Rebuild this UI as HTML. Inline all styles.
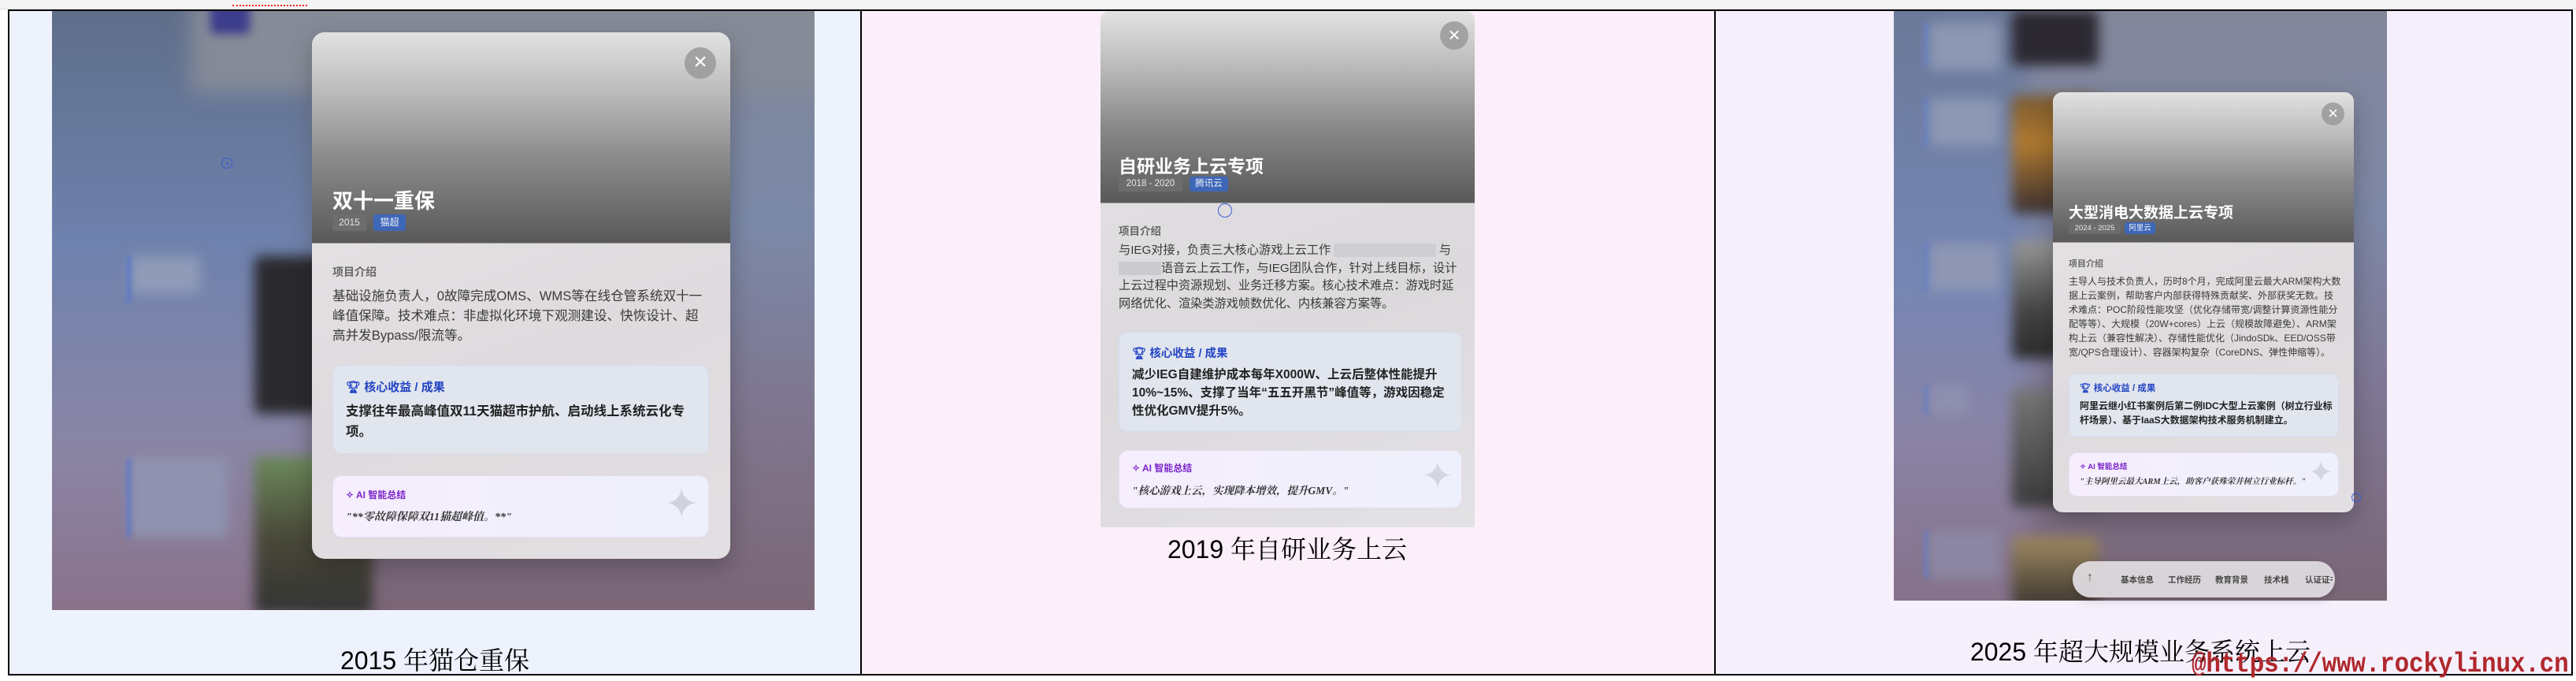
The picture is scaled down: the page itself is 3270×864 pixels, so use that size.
<!DOCTYPE html>
<html><head><meta charset="utf-8">
<style>
*{margin:0;padding:0;box-sizing:border-box}
body{width:3270px;height:864px;overflow:hidden;background:#fff;position:relative;font-family:"Liberation Sans","Noto Sans CJK SC",sans-serif}
.abs{position:absolute}
.cell{position:absolute;top:12px;height:845px}
.bd{position:absolute;background:#000}
.shot{position:absolute;overflow:hidden}
.blur{position:absolute;filter:blur(14px)}
.modal{position:absolute;overflow:hidden;border-radius:16px;background:linear-gradient(160deg,#e9e6e8,#dedadd 60%,#e2dfe2);box-shadow:0 10px 30px rgba(0,0,0,.25)}
.hdr{position:absolute;left:0;top:0;width:100%;background:linear-gradient(180deg,#e2e2e2 0%,#b9b9b9 30%,#8a8a8a 60%,#595959 100%);border-bottom:1px solid #9a9a9a}
.close{position:absolute;border-radius:50%;background:rgba(150,150,150,.8);color:#fff;text-align:center;font-weight:300}
.t{position:absolute;white-space:nowrap}
.tag{position:absolute;border-radius:3px;color:#e8e8e8;text-align:center}
.gray{background:#6d6d6d}
.blue{background:#3f67b8;color:#e9eefb}
.card1{position:absolute;border-radius:12px;background:#e1e5ee;border:1px solid #d2ddef}
.card2{position:absolute;border-radius:12px;background:linear-gradient(90deg,#f6eefc,#eef0fb);border:1px solid #e6def3}
.bl{color:#2244c4;font-weight:bold}
.pu{color:#7a22c9;font-weight:bold}
.it{font-family:"Liberation Serif","Noto Serif CJK SC",serif;font-style:italic;color:#333;font-weight:bold}
.cap{position:absolute;color:#000;font-family:"Liberation Sans","Noto Serif CJK SC",sans-serif;white-space:nowrap;transform:translateX(-50%)}
</style></head><body>
<div class="abs" style="left:0;top:0;width:3270px;height:12px;background:#f4f4f4;border-bottom:1px solid #ddd"></div>
<div class="abs" style="left:295px;top:5px;width:95px;height:3px;border-bottom:2px dotted #e22"></div>

<div class="cell" style="left:10px;width:1083px;background:#edf2fd"></div>
<div class="cell" style="left:1094px;width:1083px;background:#fbeffa"></div>
<div class="cell" style="left:2178px;width:1088px;background:#f6f0fd"></div>

<!-- PANEL 1 -->
<div class="shot" style="left:66px;top:13px;width:968px;height:761px;background:linear-gradient(180deg,#7f8698 0%,#7b89a8 35%,#7f7790 65%,#7b6676 100%)">
  <div class="blur" style="left:-30px;top:-30px;width:360px;height:820px;background:linear-gradient(180deg,#5d6c86,#6f82ae 40%,#8a86a6 70%,#8a7088)"></div>
  <div class="blur" style="left:176px;top:-20px;width:820px;height:125px;background:#868b98"></div>
  <div class="blur" style="left:201px;top:-10px;width:50px;height:40px;background:#3b3c8c;border-radius:6px;filter:blur(6px)"></div>
  <div class="blur" style="left:98px;top:312px;width:90px;height:48px;background:#8f9bb8;filter:blur(8px)"></div>
  <div class="blur" style="left:95px;top:312px;width:5px;height:60px;background:#5a78c8;filter:blur(3px)"></div>
  <div class="blur" style="left:98px;top:568px;width:125px;height:100px;background:#8f93b0;filter:blur(8px)"></div>
  <div class="blur" style="left:95px;top:568px;width:5px;height:100px;background:#5a78c8;filter:blur(3px)"></div>
  <div class="blur" style="left:257px;top:312px;width:120px;height:200px;background:#2a2a2e;border-radius:6px;filter:blur(8px)"></div>
  <div class="blur" style="left:257px;top:566px;width:150px;height:200px;background:linear-gradient(180deg,#6c8a5a,#4a4a3a 50%,#333);border-radius:6px;filter:blur(8px)"></div>
</div>
<div class="abs" style="left:281px;top:200px;width:14px;height:14px;border:1.5px solid #3c5bd4;border-radius:50%"></div>
<div class="abs" style="left:286.5px;top:205.5px;width:3px;height:3px;background:#3c5bd4;border-radius:50%"></div>

<div class="modal" style="left:396px;top:41px;width:531px;height:668px">
  <div class="hdr" style="height:268px"></div>
  <div class="close" style="left:473px;top:19px;width:40px;height:40px;line-height:38px;font-size:30px">×</div>
  <div class="t" style="left:26px;top:194px;font-size:26px;font-weight:bold;color:#fff">双十一重保</div>
  <div class="tag gray" style="left:26px;top:231px;width:43px;height:21px;line-height:21px;font-size:12px">2015</div>
  <div class="tag blue" style="left:78px;top:231px;width:41px;height:21px;line-height:21px;font-size:12px">猫超</div>
  <div class="t" style="left:26px;top:294px;font-size:14px;color:#666;font-weight:bold">项目介绍</div>
  <div class="abs" style="left:26px;top:322px;width:500px;font-size:16.6px;line-height:25px;color:#3a3a3a;white-space:nowrap">基础设施负责人，0故障完成OMS、WMS等在线仓管系统双十一<br>峰值保障。技术难点：非虚拟化环境下观测建设、快恢设计、超<br>高并发Bypass/限流等。</div>
  <div class="card1" style="left:26px;top:422px;width:478px;height:113px">
    <div class="t bl" style="left:16px;top:16px;font-size:15px">🏆︎ 核心收益 / 成果</div>
    <div class="abs" style="left:16px;top:45px;width:440px;font-size:16.5px;line-height:26px;font-weight:bold;color:#222">支撑往年最高峰值双11天猫超市护航、启动线上系统云化专项。</div>
  </div>
  <div class="card2" style="left:26px;top:562px;width:478px;height:79px">
    <div class="t pu" style="left:16px;top:15px;font-size:12px">✧ AI 智能总结</div>
    <div class="t it" style="left:16px;top:41px;font-size:14px">"**零故障保障双11猫超峰值。**"</div>
    <div class="t" style="right:12px;top:6px;font-size:52px;color:#cfd3dc">✦</div>
  </div>
</div>
<div class="cap" style="left:552px;top:813px;font-size:32px">2015 年猫仓重保</div>

<!-- PANEL 2 -->
<div class="modal" style="left:1397px;top:14px;width:475px;height:655px;border-radius:12px 12px 0 0;box-shadow:none;background:linear-gradient(160deg,#e5e3e5,#dcd9dc 60%,#e2e1e3)">
  <div class="hdr" style="height:244px"></div>
  <div class="close" style="left:431px;top:13px;width:36px;height:36px;line-height:34px;font-size:26px">×</div>
  <div class="t" style="left:23px;top:178px;font-size:23px;font-weight:bold;color:#fff">自研业务上云专项</div>
  <div class="tag gray" style="left:23px;top:210px;width:81px;height:19px;line-height:19px;font-size:11.5px">2018 - 2020</div>
  <div class="tag blue" style="left:113px;top:210px;width:49px;height:19px;line-height:19px;font-size:11.5px">腾讯云</div>
  <div class="abs" style="left:149px;top:244px;width:18px;height:18px;border:1.5px solid #3c5bd4;border-radius:50%"></div>
  <div class="t" style="left:23px;top:268px;font-size:13.5px;color:#666;font-weight:bold">项目介绍</div>
  <div class="abs" style="left:23px;top:293px;width:440px;font-size:15.2px;line-height:22.5px;color:#3a3a3a">与IEG对接，负责三大核心游戏上云工作 <span style="background:#cfcfd3;color:transparent">████████████</span> 与<br><span style="background:#cbcbcf;color:transparent">█████</span>语音云上云工作，与IEG团队合作，针对上线目标，设计<br>上云过程中资源规划、业务迁移方案。核心技术难点：游戏时延<br>网络优化、渲染类游戏帧数优化、内核兼容方案等。</div>
  <div class="card1" style="left:23px;top:407px;width:436px;height:127px">
    <div class="t bl" style="left:16px;top:15px;font-size:14.5px">🏆︎ 核心收益 / 成果</div>
    <div class="abs" style="left:16px;top:42px;width:415px;font-size:15.5px;line-height:23px;font-weight:bold;color:#222">减少IEG自建维护成本每年X000W、上云后整体性能提升<br>10%~15%、支撑了当年“五五开黑节”峰值等，游戏因稳定<br>性优化GMV提升5%。</div>
  </div>
  <div class="card2" style="left:23px;top:557px;width:436px;height:74px">
    <div class="t pu" style="left:16px;top:13px;font-size:12px">✧ AI 智能总结</div>
    <div class="t it" style="left:16px;top:39px;font-size:13.5px">"核心游戏上云，实现降本增效，提升GMV。"</div>
    <div class="t" style="right:10px;top:4px;font-size:48px;color:#d3d6de">✦</div>
  </div>
</div>
<div class="cap" style="left:1634px;top:672px;font-size:32px">2019 年自研业务上云</div>

<!-- PANEL 3 -->
<div class="shot" style="left:2404px;top:13px;width:626px;height:749px;background:linear-gradient(180deg,#83879a 0%,#7d87a6 35%,#7f7794 65%,#7a6676 100%)">
  <div class="blur" style="left:-30px;top:-30px;width:200px;height:810px;background:linear-gradient(180deg,#6b7896,#7586b4 45%,#8a84a6 70%,#866f86)"></div>
  <div class="blur" style="left:39px;top:16px;width:5px;height:55px;background:#5a78c8;filter:blur(3px)"></div>
  <div class="blur" style="left:45px;top:16px;width:90px;height:60px;background:#8c98b4;filter:blur(8px)"></div>
  <div class="blur" style="left:39px;top:112px;width:5px;height:60px;background:#5a78c8;filter:blur(3px)"></div>
  <div class="blur" style="left:45px;top:112px;width:90px;height:60px;background:#8c98b4;filter:blur(8px)"></div>
  <div class="blur" style="left:39px;top:296px;width:5px;height:60px;background:#5a78c8;filter:blur(3px)"></div>
  <div class="blur" style="left:45px;top:296px;width:90px;height:60px;background:#8e96b4;filter:blur(8px)"></div>
  <div class="blur" style="left:39px;top:477px;width:5px;height:35px;background:#5a78c8;filter:blur(3px)"></div>
  <div class="blur" style="left:45px;top:477px;width:50px;height:35px;background:#8e90b0;filter:blur(8px)"></div>
  <div class="blur" style="left:39px;top:660px;width:5px;height:60px;background:#5a78c8;filter:blur(3px)"></div>
  <div class="blur" style="left:45px;top:660px;width:90px;height:60px;background:#8c88a4;filter:blur(8px)"></div>
  <div class="blur" style="left:150px;top:0;width:110px;height:70px;background:#2b2830;border-radius:6px;filter:blur(8px)"></div>
  <div class="blur" style="left:150px;top:108px;width:110px;height:150px;background:linear-gradient(180deg,#7a5a30,#b07a30 40%,#3a3030);border-radius:6px;filter:blur(8px)"></div>
  <div class="blur" style="left:150px;top:292px;width:110px;height:150px;background:linear-gradient(180deg,#999,#444 60%,#2a2a2a);border-radius:6px;filter:blur(8px)"></div>
  <div class="blur" style="left:150px;top:480px;width:110px;height:150px;background:linear-gradient(180deg,#777,#3a3a3a);border-radius:6px;filter:blur(8px)"></div>
  <div class="blur" style="left:150px;top:668px;width:110px;height:90px;background:linear-gradient(180deg,#a08a60,#3a3530);border-radius:6px;filter:blur(8px)"></div>
</div>
<div class="modal" style="left:2606px;top:117px;width:382px;height:533px;border-radius:12px">
  <div class="hdr" style="height:191px"></div>
  <div class="close" style="left:341px;top:13px;width:29px;height:29px;line-height:28px;font-size:22px">×</div>
  <div class="t" style="left:20px;top:138px;font-size:19px;font-weight:bold;color:#fff">大型消电大数据上云专项</div>
  <div class="tag gray" style="left:20px;top:165px;width:66px;height:15px;line-height:15px;font-size:9.5px">2024 - 2025</div>
  <div class="tag blue" style="left:91px;top:165px;width:39px;height:15px;line-height:15px;font-size:9.5px">阿里云</div>
  <div class="t" style="left:20px;top:209px;font-size:11px;color:#666;font-weight:bold">项目介绍</div>
  <div class="abs" style="left:20px;top:231px;width:360px;font-size:12px;line-height:18px;color:#3a3a3a;white-space:nowrap">主导人与技术负责人，历时8个月，完成阿里云最大ARM架构大数<br>据上云案例，帮助客户内部获得特殊贡献奖、外部获奖无数。技<br>术难点：POC阶段性能攻坚（优化存储带宽/调整计算资源性能分<br>配等等）、大规模（20W+cores）上云（规模故障避免）、ARM架<br>构上云（兼容性解决）、存储性能优化（JindoSDk、EED/OSS带<br>宽/QPS合理设计）、容器架构复杂（CoreDNS、弹性伸缩等）。</div>
  <div class="card1" style="left:20px;top:357px;width:343px;height:81px;border-radius:10px">
    <div class="t bl" style="left:13px;top:9px;font-size:11.5px">🏆︎ 核心收益 / 成果</div>
    <div class="abs" style="left:13px;top:31px;width:330px;font-size:12px;line-height:18px;font-weight:bold;color:#222;white-space:nowrap">阿里云继小红书案例后第二例IDC大型上云案例（树立行业标<br>杆场景）、基于IaaS大数据架构技术服务机制建立。</div>
  </div>
  <div class="card2" style="left:20px;top:457px;width:343px;height:56px;border-radius:10px">
    <div class="t pu" style="left:13px;top:9px;font-size:9.5px">✧ AI 智能总结</div>
    <div class="t it" style="left:13px;top:28px;font-size:10.5px">"主导阿里云最大ARM上云，助客户获殊荣并树立行业标杆。"</div>
    <div class="t" style="right:6px;top:2px;font-size:38px;color:#d3d6de">✦</div>
  </div>
</div>
<div class="abs" style="left:2985px;top:625px;width:12px;height:12px;border:1.5px solid #3c5bd4;border-radius:50%"></div>
<div class="abs" style="left:2631px;top:712px;width:333px;height:46px;border-radius:23px;background:rgba(222,218,222,.95);box-shadow:0 4px 12px rgba(0,0,0,.15)">
  <div class="t" style="left:18px;top:12px;font-size:16px;color:#555">↑</div>
  <div class="t" style="left:61px;top:16px;font-size:10.5px;color:#444;font-weight:bold">基本信息</div>
  <div class="t" style="left:121px;top:16px;font-size:10.5px;color:#444;font-weight:bold">工作经历</div>
  <div class="t" style="left:181px;top:16px;font-size:10.5px;color:#444;font-weight:bold">教育背景</div>
  <div class="t" style="left:243px;top:16px;font-size:10.5px;color:#444;font-weight:bold">技术栈</div>
  <div class="t" style="left:295px;top:16px;font-size:10.5px;color:#444;font-weight:bold;width:35px;overflow:hidden">认证证书</div>
</div>
<div class="cap" style="left:2717px;top:802px;font-size:32px">2025 年超大规模业务系统上云</div>

<div class="bd" style="left:10px;top:12px;width:3256px;height:2px"></div>
<div class="bd" style="left:10px;top:855px;width:3256px;height:2px"></div>
<div class="bd" style="left:10px;top:12px;width:2px;height:845px"></div>
<div class="bd" style="left:1092px;top:12px;width:2px;height:845px"></div>
<div class="bd" style="left:2176px;top:12px;width:2px;height:845px"></div>
<div class="bd" style="left:3264px;top:12px;width:2px;height:845px"></div>

<div class="t" style="left:2782px;top:823px;font-family:'Liberation Mono',monospace;font-size:31px;color:#b0282c;font-weight:bold;letter-spacing:-0.2px;transform:scaleY(1.15);transform-origin:top left">@https://www.rockylinux.cn</div>
</body></html>
